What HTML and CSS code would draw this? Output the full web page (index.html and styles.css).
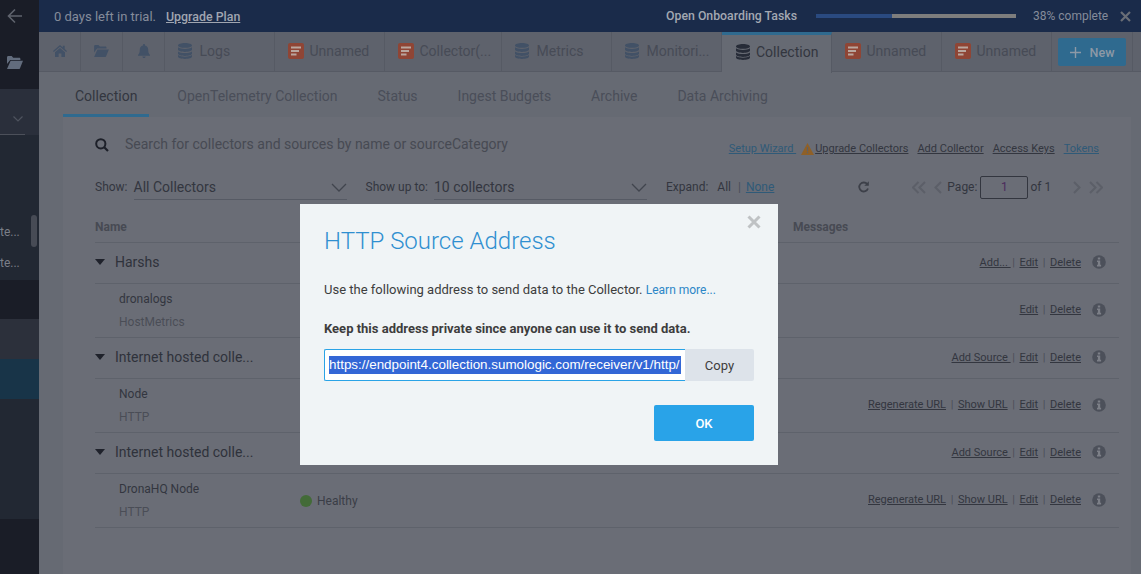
FILE: index.html
```html
<!DOCTYPE html>
<html lang="en">
<head>
  <meta charset="UTF-8" />
  <title>Collection</title>
  <link rel="stylesheet" href="styles.css">
</head>
<body>
  <svg class="defs" width="0" height="0">
    <symbol id="db" viewBox="0 0 14 16">
      <path d="M7 0C3.2 0 0 1 0 2.400S3.2 4.800 7 4.800s7-1 7-2.400S10.800 0 7 0zM0 4.300V6.500c0 1.400 3.200 2.400 7 2.400s7-1 7-2.400V4.300c-1.500 1.100-4.200 1.600-7 1.600S1.500 5.400 0 4.300zM0 8.400v2.200c0 1.400 3.200 2.400 7 2.400s7-1 7-2.400V8.400c-1.500 1.100-4.200 1.600-7 1.600S1.500 9.500 0 8.400zM0 12.100v1.500C0 15 3.200 16 7 16s7-1 7-2.400v-1.500c-1.500 1.100-4.200 1.600-7 1.600s-5.500-.5-7-1.600z"/>
    </symbol>
    <symbol id="doc" viewBox="0 0 16 16">
      <rect width="16" height="16" rx="2" fill="#8f4535"/>
      <path d="M3 3.500h10v2H3zM3 7h8v2H3zM3 10.500h5.500v2H3z" fill="#b9a69e"/>
    </symbol>
    <symbol id="info" viewBox="0 0 14 14">
      <circle cx="7" cy="7" r="6.800" fill="#4c505a"/>
      <path d="M5.800 2.400h2.400v2H5.800zM5 5.400h3.200v4.300h.9v1.700H5V9.700h.9V7.100H5z" fill="#7c7f87"/>
    </symbol>
  </svg>

  <aside class="side">
    <div class="side-top">
      <svg class="back" width="16" height="16" viewBox="0 0 16 16"><path d="M8 1.500 1.500 8 8 14.500M1.500 8H15" fill="none" stroke="#5f636d" stroke-width="1.600"/></svg>
      <svg class="side-folder" width="16" height="13" viewBox="0 0 16 13"><path d="M0 1.500C0 .7.500 0 1.300 0h3.400l1.500 1.700h6c.7 0 1.200.5 1.200 1.200v1H3.200L0 8zM3.600 4.800H16l-2.900 7.200c-.1.600-.6 1-1.200 1H0z" fill="#626c7d"/></svg>
    </div>
    <div class="side-drop">
      <svg width="12" height="8" viewBox="0 0 12 8"><path d="M1.500 1.500 6 6l4.500-4.500" fill="none" stroke="#4e535e" stroke-width="1.200"/></svg>
      <i class="side-line"></i>
    </div>
    <div class="side-list">
      <span class="side-item">te...</span>
      <span class="side-item">te...</span>
      <i class="side-scroll"></i>
    </div>
    <div class="side-gap"></div>
    <div class="side-hover"></div>
    <div class="side-active"></div>
    <div class="side-rest"></div>
    <div class="side-foot"></div>
  </aside>

  <div class="app">
    <header class="topbar">
      <span class="trial">0 days left in trial.</span>
      <a class="upgrade">Upgrade Plan</a>
      <span class="onboard">Open Onboarding Tasks</span>
      <div class="progress"><i></i></div>
      <span class="percent">38% complete</span>
      <svg class="top-close" width="11" height="11" viewBox="0 0 11 11"><path d="M1 1l9 9M10 1l-9 9" stroke="#6a6e76" stroke-width="2.200"/></svg>
    </header>

    <nav class="tabs">
      <div class="tab tab-icon"><svg width="14" height="12" viewBox="0 0 14 12"><path d="M7 0 0 6l.8 1L7 1.800 13.200 7l.8-1-2.300-2V.8H9.800v1.600zM2 7.200V12h3.600V8.500h2.800V12H12V7.200L7 3z" fill="#425166"/></svg></div>
      <div class="tab tab-icon"><svg width="15" height="12" viewBox="0 0 16 13"><path d="M0 1.500C0 .7.500 0 1.300 0h3.400l1.500 1.700h6c.7 0 1.200.5 1.200 1.200v1H3.200L0 8zM3.600 4.800H16l-2.900 7.200c-.1.600-.6 1-1.200 1H0z" fill="#425166"/></svg></div>
      <div class="tab tab-icon"><svg width="12" height="14" viewBox="0 0 12 14"><path d="M6 0c.6 0 1 .4 1 1v.6c2 .4 3.200 2 3.200 4 0 3.200.6 4.300 1.800 5.400v.8H0V11c1.200-1.100 1.800-2.200 1.800-5.400 0-2 1.200-3.600 3.200-4V1c0-.6.400-1 1-1zM4.400 12.500h3.200C7.600 13.400 6.900 14 6 14s-1.600-.6-1.600-1.500z" fill="#425166"/></svg></div>
      <div class="tab"><svg class="tab-ic tab-ic-db" width="14" height="16"><use href="#db" fill="#425166"/></svg>Logs</div>
      <div class="tab"><svg class="tab-ic" width="16" height="16"><use href="#doc"/></svg>Unnamed</div>
      <div class="tab tab-wide"><svg class="tab-ic" width="16" height="16"><use href="#doc"/></svg>Collector(...</div>
      <div class="tab"><svg class="tab-ic tab-ic-db" width="14" height="16"><use href="#db" fill="#425166"/></svg>Metrics</div>
      <div class="tab"><svg class="tab-ic tab-ic-db" width="14" height="16"><use href="#db" fill="#425166"/></svg>Monitori...</div>
      <div class="tab tab-active"><svg class="tab-ic" width="14" height="16"><use href="#db" fill="#272c38"/></svg>Collection</div>
      <div class="tab"><svg class="tab-ic" width="16" height="16"><use href="#doc"/></svg>Unnamed</div>
      <div class="tab"><svg class="tab-ic" width="16" height="16"><use href="#doc"/></svg>Unnamed</div>
      <div class="tab-new">
        <button class="new-btn"><svg width="11" height="11" viewBox="0 0 11 11"><path d="M5.500 0v11M0 5.500h11" stroke="#8d99a6" stroke-width="1.400"/></svg>New</button>
      </div>
    </nav>

    <div class="subtabs">
      <a class="subtab subtab-active">Collection</a>
      <a class="subtab">OpenTelemetry Collection</a>
      <a class="subtab">Status</a>
      <a class="subtab">Ingest Budgets</a>
      <a class="subtab">Archive</a>
      <a class="subtab">Data Archiving</a>
    </div>

    <main class="card">
      <div class="search-row">
        <svg class="search-ic" width="14" height="14" viewBox="0 0 14 14"><circle cx="5.800" cy="5.800" r="4.600" fill="none" stroke="#1d2029" stroke-width="2"/><path d="M9.200 9.200 13 13" stroke="#1d2029" stroke-width="2.200"/></svg>
        <span class="search-text">Search for collectors and sources by name or sourceCategory</span>
        <div class="links">
          <a class="link-blue link-wizard">Setup Wizard&nbsp;</a>
          <svg class="warn" width="13" height="12" viewBox="0 0 13 12"><path d="M6.500 0 13 12H0z" fill="#8f6027"/><path d="M5.900 4h1.200v4.200H5.900zM5.900 9h1.200v1.300H5.900z" fill="#5c5f68"/></svg>
          <a class="link-dark">Upgrade Collectors</a>
          <a class="link-dark">Add Collector</a>
          <a class="link-dark">Access Keys</a>
          <a class="link-blue">Tokens</a>
        </div>
      </div>

      <div class="filter-row">
        <span class="filter-label">Show:</span>
        <div class="select"><span>All Collectors</span><svg width="16" height="9" viewBox="0 0 16 9"><path d="M1 1l7 7 7-7" fill="none" stroke="#41454e" stroke-width="1.300"/></svg></div>
        <span class="filter-label label-upto">Show up to:</span>
        <div class="select"><span>10 collectors</span><svg width="16" height="9" viewBox="0 0 16 9"><path d="M1 1l7 7 7-7" fill="none" stroke="#41454e" stroke-width="1.300"/></svg></div>
        <span class="filter-label label-expand">Expand:</span>
        <span class="expand-all">All</span>
        <span class="sep">|</span>
        <a class="link-blue expand-none">None</a>
        <svg class="refresh" width="11" height="12" viewBox="0 0 11 12"><path d="M9.300 3.200A4.500 4.500 0 1 0 10 7.500" fill="none" stroke="#3d4049" stroke-width="1.800"/><path d="M10.800 .3v4.500H6.300z" fill="#3d4049"/></svg>
        <svg class="pg-first" width="14" height="13" viewBox="0 0 14 13"><path d="M6.500 1 1 6.500 6.500 12M13 1 7.500 6.500 13 12" fill="none" stroke="#5c5f68" stroke-width="2"/></svg>
        <svg class="pg-prev" width="8" height="13" viewBox="0 0 8 13"><path d="M7 1 1.500 6.500 7 12" fill="none" stroke="#5c5f68" stroke-width="2"/></svg>
        <span class="page-label">Page:</span>
        <div class="page-box">1</div>
        <span class="page-of">of 1</span>
        <svg class="pg-next" width="8" height="13" viewBox="0 0 8 13"><path d="M1 1l5.500 5.500L1 12" fill="none" stroke="#5c5f68" stroke-width="2"/></svg>
        <svg class="pg-last" width="14" height="13" viewBox="0 0 14 13"><path d="M1 1l5.500 5.500L1 12M7.500 1 13 6.500 7.500 12" fill="none" stroke="#5c5f68" stroke-width="2"/></svg>
      </div>

      <div class="table">
        <div class="row row-head"><span class="col-name">Name</span><span class="col-status"></span><span class="col-msg">Messages</span></div>

        <div class="row row-group">
          <span class="col-name group-name"><i class="caret"></i>Harshs</span>
          <div class="actions"><a class="add-link">Add...&nbsp;</a><b>|</b><a>Edit</a><b>|</b><a>Delete</a><svg width="14" height="14"><use href="#info"/></svg></div>
        </div>
        <div class="row row-source">
          <span class="col-name source-name">dronalogs<small>HostMetrics</small></span>
          <div class="actions"><a>Edit</a><b>|</b><a>Delete</a><svg width="14" height="14"><use href="#info"/></svg></div>
        </div>

        <div class="row row-group">
          <span class="col-name group-name"><i class="caret"></i>Internet hosted colle...</span>
          <div class="actions"><a class="add-link">Add Source&nbsp;</a><b>|</b><a>Edit</a><b>|</b><a>Delete</a><svg width="14" height="14"><use href="#info"/></svg></div>
        </div>
        <div class="row row-source">
          <span class="col-name source-name">Node<small>HTTP</small></span>
          <div class="actions"><a>Regenerate URL</a><b>|</b><a>Show URL</a><b>|</b><a>Edit</a><b>|</b><a>Delete</a><svg width="14" height="14"><use href="#info"/></svg></div>
        </div>

        <div class="row row-group">
          <span class="col-name group-name"><i class="caret"></i>Internet hosted colle...</span>
          <div class="actions"><a class="add-link">Add Source&nbsp;</a><b>|</b><a>Edit</a><b>|</b><a>Delete</a><svg width="14" height="14"><use href="#info"/></svg></div>
        </div>
        <div class="row row-source">
          <span class="col-name source-name">DronaHQ Node<small>HTTP</small></span>
          <span class="col-status status"><i class="dot"></i>Healthy</span>
          <div class="actions"><a>Regenerate URL</a><b>|</b><a>Show URL</a><b>|</b><a>Edit</a><b>|</b><a>Delete</a><svg width="14" height="14"><use href="#info"/></svg></div>
        </div>
      </div>
    </main>
  </div>

  <div class="modal">
    <svg class="modal-close" width="14" height="14" viewBox="0 0 14 14"><path d="M1.500 1.500l11 11M12.500 1.500l-11 11" stroke="#bfc2c4" stroke-width="3"/></svg>
    <h2 class="modal-title">HTTP Source Address</h2>
    <p class="modal-text">Use the following address to send data to the Collector. <a>Learn more...</a></p>
    <p class="modal-warn">Keep this address private since anyone can use it to send data.</p>
    <div class="address">
      <div class="address-input"><span>https://endpoint4.collection.sumologic.com/receiver/v1/http/</span></div>
      <button class="copy-btn">Copy</button>
    </div>
    <div class="modal-foot"><button class="ok-btn">OK</button></div>
  </div>
</body>
</html>
```

FILE: styles.css
```css
* {
  box-sizing: border-box;
}
body {
  margin: 0;
  height: 574px;
  overflow: hidden;
  display: flex;
  position: relative;
  font-family: Roboto, sans-serif;
  background: #666a73;
  color: #33363f;
}
a {
  text-decoration: underline;
}
button {
  font-family: inherit;
  border: none;
  padding: 0;
}
.defs {
  position: absolute;
}

/* left rail */
.side {
  width: 39px;
  flex: none;
  display: flex;
  flex-direction: column;
  overflow: hidden;
  font-size: 12px;
  color: #7b7f88;
}
.side-top {
  height: 89px;
  background: #1a1d27;
  position: relative;
}
.back {
  position: absolute;
  left: 7px;
  top: 8px;
}
.side-folder {
  position: absolute;
  left: 7px;
  top: 56px;
}
.side-drop {
  height: 46px;
  background: #2a2f3b;
  padding: 26px 0 0 12px;
  position: relative;
}
.side-drop svg {
  display: block;
}
.side-line {
  position: absolute;
  left: 0;
  bottom: 0;
  width: 25px;
  height: 1px;
  background: #4c505a;
}
.side-list {
  height: 145px;
  background: #222833;
  position: relative;
  padding-top: 90px;
  display: flex;
  flex-direction: column;
  gap: 16px;
  align-items: flex-start;
}
.side-item {
  line-height: 15px;
}
.side-scroll {
  position: absolute;
  left: 31px;
  top: 80px;
  width: 6px;
  height: 32px;
  border-radius: 3px;
  background: #474b55;
}
.side-gap {
  height: 39px;
  background: #1a1d27;
}
.side-hover {
  height: 40px;
  background: #2c303b;
}
.side-active {
  height: 40px;
  background: #183448;
}
.side-rest {
  height: 120px;
  background: #222833;
}
.side-foot {
  flex: 1;
  background: #1a1d27;
}

.app {
  flex: 1;
  min-width: 0;
  display: flex;
  flex-direction: column;
}

/* top notice bar */
.topbar {
  height: 32px;
  flex: none;
  background: #1a2b4a;
  display: flex;
  align-items: center;
  padding-left: 15px;
  font-size: 13px;
  color: #858c9a;
}
.trial {
  width: 112px;
}
.upgrade {
  font-weight: 500;
  color: #a0a5b0;
  font-size: 12.4px;
}
.onboard {
  margin-left: auto;
  font-weight: 500;
  font-size: 12.3px;
  color: #a3a8b2;
}
.progress {
  width: 200px;
  height: 4px;
  margin-left: 19px;
  background: #7d7d7d;
}
.progress i {
  display: block;
  width: 38%;
  height: 100%;
  background: #2a4a80;
}
.percent {
  margin-left: 17px;
  width: 87px;
  font-size: 12px;
}
.top-close {
  margin-right: 10px;
}

/* tab strip */
.tabs {
  height: 40px;
  flex: none;
  display: flex;
  background: #5e626c;
  border-bottom: 1px solid #565a64;
  font-size: 14px;
  color: #474b56;
  line-height: 1;
}
.tab {
  width: 110px;
  display: flex;
  align-items: center;
  padding: 0 0 1px 12.5px;
  border-right: 1px solid #565a64;
  white-space: nowrap;
}
.tab-wide {
  width: 117px;
}
.tab-icon {
  width: 42px;
  padding-left: 0;
  justify-content: center;
}
.tab-ic {
  margin-right: 6px;
  flex: none;
}
.tab-ic-db {
  margin-right: 8px;
}
.tab-active {
  height: 41px;
  background: #666a73;
  border-top: 3px solid #2f6a8f;
  color: #33363f;
  padding: 0 0 4px 14px;
  position: relative;
}
.tab-new {
  width: 81px;
  padding: 6px 0 5px 6px;
  border-right: 1px solid #565a64;
}
.new-btn {
  width: 68px;
  height: 28px;
  background: #2f6a8f;
  color: #8d99a6;
  border-radius: 2px;
  font-size: 12.5px;
  font-weight: 500;
  display: flex;
  align-items: center;
  justify-content: center;
  gap: 9px;
}

/* sub navigation */
.subtabs {
  height: 45px;
  flex: none;
  display: flex;
  padding-left: 24px;
  font-size: 14px;
  color: #4a4e59;
}
.subtab {
  text-decoration: none;
  padding: 16px 12px 0;
  margin-right: 16px;
  white-space: nowrap;
}
.subtab-active {
  color: #33363f;
  border-bottom: 3px solid #2f6a8f;
}

/* collection panel */
.card {
  flex: 1;
  margin: 0 10px 0 24px;
  padding: 0 12px 0 32px;
  background: #6a6d76;
}
.search-row {
  height: 49px;
  display: flex;
  align-items: center;
  padding-top: 6px;
}
.search-ic {
  flex: none;
  margin-right: 16px;
}
.search-text {
  font-size: 14px;
  color: #474a53;
  white-space: nowrap;
  margin-bottom: 2px;
}
.links {
  margin-left: auto;
  margin-right: 20px;
  display: flex;
  align-items: center;
  gap: 9px;
  font-size: 11px;
  padding-top: 8px;
  white-space: nowrap;
}
.link-blue {
  color: #2f5a78;
}
.link-dark {
  color: #33363f;
}
.link-wizard {
  margin-right: -4px;
}
.warn {
  margin-right: -8px;
}

.filter-row {
  height: 32px;
  margin-top: 5px;
  display: flex;
  align-items: center;
  font-size: 12px;
  white-space: nowrap;
}
.filter-label {
  color: #33363f;
}
.select {
  width: 213px;
  height: 24px;
  margin-left: 6px;
  margin-top: 1px;
  border-bottom: 1px solid #565a64;
  display: flex;
  align-items: center;
  justify-content: space-between;
  font-size: 14px;
}
.label-upto {
  margin-left: 19px;
}
.label-expand {
  margin-left: 19px;
}
.expand-all {
  margin-left: 9px;
}
.sep {
  margin: 0 5px 0 7px;
  color: #4a4e59;
}
.refresh {
  margin-left: 84px;
}
.pg-first {
  margin-left: 43px;
}
.pg-prev {
  margin-left: 8px;
}
.page-label {
  margin-left: 5px;
}
.page-box {
  width: 48px;
  height: 23px;
  margin-left: 3px;
  border: 1px solid #33363f;
  border-radius: 2px;
  text-align: center;
  line-height: 21px;
  color: #4b2b5c;
}
.page-of {
  margin-left: 2px;
}
.pg-next {
  margin-left: 22px;
}
.pg-last {
  margin-left: 8px;
}

.table {
  margin-top: 7px;
  font-size: 12px;
}
.row {
  display: flex;
  align-items: center;
  border-bottom: 1px solid #5e626b;
}
.row-head {
  height: 33px;
  font-weight: 700;
  color: #474a53;
  padding-top: 2px;
}
.row-group {
  height: 41px;
  padding-bottom: 2px;
}
.row-source {
  height: 54px;
  padding-bottom: 2px;
}
.col-name {
  width: 205px;
  flex: none;
}
.col-status {
  width: 493px;
  flex: none;
}
.group-name {
  font-size: 14px;
  display: flex;
  align-items: center;
  color: #2f323b;
  white-space: nowrap;
}
.caret {
  width: 0;
  height: 0;
  margin-right: 10px;
  border-left: 5px solid transparent;
  border-right: 5px solid transparent;
  border-top: 6px solid #1f222b;
}
.source-name {
  padding: 2px 0 0 24px;
  color: #33363f;
  display: flex;
  flex-direction: column;
  gap: 7px;
  line-height: 16px;
}
.source-name small {
  font-size: 12px;
  color: #4a4d56;
}
.status {
  width: auto;
  display: flex;
  align-items: center;
  color: #3a3d46;
  gap: 5px;
  padding-top: 2px;
}
.dot {
  width: 12px;
  height: 12px;
  border-radius: 50%;
  background: #436b38;
}
.actions {
  margin-left: auto;
  display: flex;
  align-items: center;
  font-size: 11px;
  color: #33363f;
  white-space: nowrap;
  padding-right: 13px;
}
.actions b {
  font-weight: 400;
  margin: 0 4.6px;
  color: #4a4e59;
}
.actions svg {
  margin-left: 11px;
}
.add-link {
  margin-right: -3px;
}

/* dialog */
.modal {
  position: absolute;
  left: 300px;
  top: 204px;
  width: 478px;
  height: 261px;
  background: #f0f4f6;
  padding: 23px 24px 0;
  color: #3d3d3d;
}
.modal-close {
  position: absolute;
  right: 17px;
  top: 11px;
}
.modal-title {
  margin: 0;
  font-size: 24px;
  font-weight: 300;
  line-height: 28px;
  color: #2f8fd0;
}
.modal-text {
  margin: 26px 0 0;
  font-size: 13px;
  line-height: 18px;
}
.modal-text a {
  text-decoration: none;
  font-size: 12px;
  color: #2c86c7;
}
.modal-warn {
  margin: 21px 0 0;
  font-size: 13px;
  font-weight: 700;
  line-height: 18px;
}
.address {
  display: flex;
  height: 32px;
  margin-top: 11px;
}
.address-input {
  width: 361px;
  background: #fff;
  border: 1px solid #2aa3e6;
  border-right: none;
  border-radius: 2px 0 0 2px;
  padding: 6px 0 0 4px;
  white-space: nowrap;
  font-family: "Liberation Sans", Arial, sans-serif;
  font-size: 13.4px;
  line-height: 18px;
}
.address-input span {
  display: block;
  width: 352px;
  overflow: hidden;
  background: #3367d6;
  color: #fff;
}
.copy-btn {
  width: 69px;
  background: #dde3ea;
  border-radius: 0 2px 2px 0;
  font-size: 13px;
  color: #3d3d3d;
}
.modal-foot {
  display: flex;
  justify-content: flex-end;
  margin-top: 24px;
}
.ok-btn {
  width: 100px;
  height: 36px;
  background: #29a3e8;
  color: #fff;
  border-radius: 2px;
  font-size: 13px;
  font-weight: 500;
}
```
